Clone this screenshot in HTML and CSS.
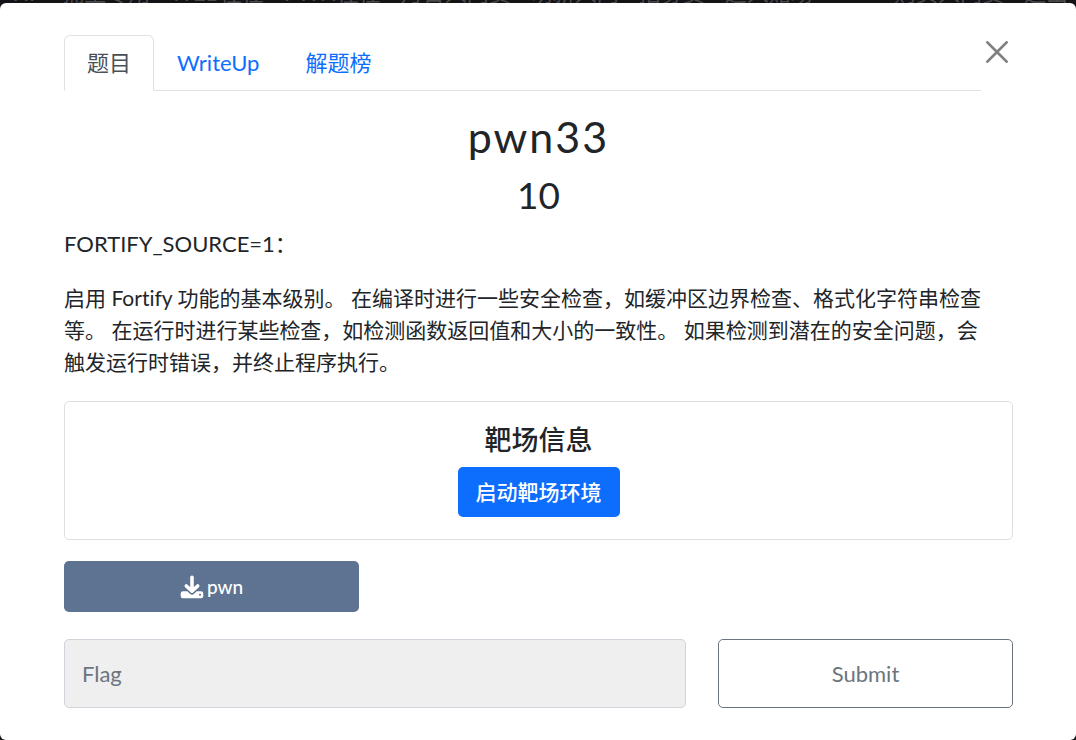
FILE: index.html
```html
<!DOCTYPE html>
<html lang="zh-CN">
<head>
<meta charset="utf-8">
<meta name="viewport" content="width=device-width, initial-scale=1">
<title>pwn33</title>
<link rel="stylesheet" href="styles.css">
</head>
<body>
<nav class="backdrop" aria-hidden="true">
  <div class="backdrop-line">
    <span>VIP</span><span>捕王专用</span><span>WEB往任</span><span>PWN往任</span><span>月日入门赛</span><span>萌新入门</span><span>招募赛</span><span>进入赌场</span><span class="backdrop-end">购买入门赛</span><span>退出</span>
  </div>
</nav>
<main class="modal">
  <header class="modal-head">
    <ul class="tabs">
      <li><a class="tab active" href="#challenge">题目</a></li>
      <li><a class="tab" href="#writeup">WriteUp</a></li>
      <li><a class="tab" href="#solves">解题榜</a></li>
    </ul>
    <button class="close" type="button" aria-label="Close">
      <svg viewBox="0 0 16 16" width="22" height="22" fill="currentColor"><path d="M.293.293a1 1 0 011.414 0L8 6.586 14.293.293a1 1 0 111.414 1.414L9.414 8l6.293 6.293a1 1 0 01-1.414 1.414L8 9.414l-6.293 6.293a1 1 0 01-1.414-1.414L6.586 8 .293 1.707a1 1 0 010-1.414z"/></svg>
    </button>
  </header>
  <section id="challenge">
    <h2 class="name">pwn33</h2>
    <h3 class="value">10</h3>
    <div class="description">
      <p class="lead">FORTIFY_SOURCE=1：</p>
      <p>启用 Fortify 功能的基本级别。 在编译时进行一些安全检查，如缓冲区边界检查、格式化字符串检查等。 在运行时进行某些检查，如检测函数返回值和大小的一致性。 如果检测到潜在的安全问题，会触发运行时错误，并终止程序执行。</p>
    </div>
    <div class="card">
      <h5 class="card-title">靶场信息</h5>
      <button class="btn btn-primary" type="button">启动靶场环境</button>
    </div>
    <div class="files">
      <a class="btn btn-file" href="#pwn">
        <svg viewBox="0 0 24 24" width="24" height="24" aria-hidden="true"><path d="M3 16.2h4.2l3 2.8a2.7 2.7 0 003.6 0l3-2.8H21a2.3 2.3 0 012.3 2.3v2.6a2.2 2.2 0 01-2.2 2.2H2.9a2.2 2.2 0 01-2.2-2.2v-2.6A2.3 2.3 0 013 16.2z" fill="#fff"/><path d="M12 2.300V16M6.300 11L12 16.200l5.700-5.200" fill="none" stroke="#5e7391" stroke-width="5" stroke-linecap="round" stroke-linejoin="round"/><circle cx="20" cy="19.8" r="1" fill="#5e7391"/><path d="M12 2.300V16M6.300 11L12 16.200l5.700-5.200" fill="none" stroke="#fff" stroke-width="3.600" stroke-linecap="round" stroke-linejoin="round"/></svg>
        <span>pwn</span>
      </a>
    </div>
    <form class="submit-row">
      <input class="flag" type="text" placeholder="Flag" aria-label="Flag">
      <button class="btn btn-outline" type="button">Submit</button>
    </form>
  </section>
</main>
</body>
</html>
```
FILE: styles.css
```css
* { box-sizing: border-box; }
body {
  margin: 0;
  min-height: 100vh;
  display: flex;
  flex-direction: column;
  background: #141416;
  color: #212529;
  font-family: Lato, "Noto Sans CJK SC", sans-serif;
  font-size: 22px;
  line-height: 32px;
  font-variant-ligatures: none;
}
.backdrop {
  height: 3px;
  overflow: hidden;
  display: flex;
  align-items: flex-end;
  color: #4a4a4c;
}
.backdrop-line {
  flex: 1;
  display: flex;
  gap: 20px;
  padding: 0 8px;
  line-height: 20px;
  white-space: nowrap;
}
.backdrop-end { margin-left: auto; }
.modal {
  flex: 1;
  padding: 32px 63px 32px 64px;
  background: #fff;
  border-radius: 6px;
}
.modal-head { display: flex; align-items: flex-start; }
.tabs {
  flex: 1;
  display: flex;
  margin: 0;
  padding: 0;
  list-style: none;
  border-bottom: 1px solid #dee2e6;
}
.tab {
  display: block;
  margin-bottom: -1px;
  padding: 11px 22px;
  border: 1px solid transparent;
  border-radius: 6px 6px 0 0;
  color: #0d6efd;
  text-decoration: none;
}
.tab.active {
  background: #fff;
  border-color: #dee2e6 #dee2e6 #fff;
  color: #495057;
}
.close {
  display: flex;
  padding: 6px 5px;
  border: 0;
  background: none;
  color: #808080;
}
.name, .value, .card-title { margin: 0; text-align: center; }
.name {
  margin-top: 20px;
  font-size: 43px;
  font-weight: 400;
  line-height: 52px;
  letter-spacing: 2px;
}
.value {
  margin-top: 10px;
  font-size: 37px;
  font-weight: 400;
  line-height: 44px;
}
.description { padding-right: 16px; margin-top: 11px; font-size: 21px; }
.description p { margin: 0 0 22px; }
.description .lead { font-size: 22px; }
.card {
  display: flex;
  flex-direction: column;
  align-items: center;
  gap: 11px;
  margin-top: 23px;
  padding: 21px 22px 22px;
  border: 1px solid #dfdfdf;
  border-radius: 5px;
}
.card-title { font-size: 27px; font-weight: 500; line-height: 33px; }
.btn {
  display: flex;
  align-items: center;
  justify-content: center;
  border: 1px solid transparent;
  border-radius: 5px;
  font-family: inherit;
  font-size: 22px;
  line-height: 32px;
  text-decoration: none;
}
.btn-primary {
  padding: 8px 17px;
  background: #0d6efd;
  color: #fff;
  font-size: 21px;
  font-weight: 500;
}
.files, .submit-row {
  display: grid;
  grid-template-columns: repeat(3, 1fr);
  column-gap: 32px;
}
.files { margin-top: 21px; }
.btn-file {
  gap: 3px;
  padding: 9px 16px;
  background: #5e7391;
  color: #fff;
  font-size: 19px;
  font-weight: 500;
  line-height: 31px;
}
.submit-row { margin-top: 27px; }
.flag {
  grid-column: span 2;
  min-width: 0;
  padding: 18px 17px 17px;
  border: 1px solid #ced4da;
  border-radius: 5px;
  background: #efefef;
  color: #495057;
  font: inherit;
}
.flag::placeholder { color: #6c757d; opacity: 1; }
.btn-outline {
  background: #fff;
  border-color: #6c757d;
  color: #6c757d;
}
```
